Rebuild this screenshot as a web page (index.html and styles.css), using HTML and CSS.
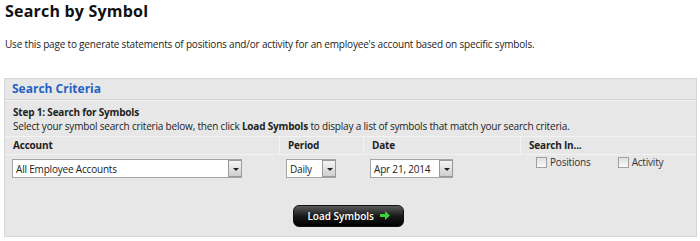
FILE: index.html
```html
<!DOCTYPE html>
<html lang="en">
<head>
    <meta charset="UTF-8">
    <title>Search by Symbol</title>
    <link rel="stylesheet" href="styles.css">
</head>
<body>
    <div class="page-title">Search by Symbol</div>
    <p class="intro">Use this page to generate statements of positions and/or activity for an employee's account based on specific symbols.</p>

    <div class="panel">
        <div class="panel-head">Search Criteria</div>
        <div class="step">
            <div class="step-title">Step 1: Search for Symbols</div>
            <div class="step-text">Select your symbol search criteria below, then click <b>Load Symbols</b> to display a list of symbols that match your search criteria.</div>
        </div>

        <div class="criteria">
            <div class="col-head">Account</div>
            <div class="col-head sep">Period</div>
            <div class="col-head sep">Date</div>
            <div class="col-head sep">Search In...</div>

            <div class="cell">
                <div class="dropdown dd-account"><span class="dd-value">All Employee Accounts</span><span class="dd-arrow"></span></div>
            </div>
            <div class="cell">
                <div class="dropdown dd-period"><span class="dd-value">Daily</span><span class="dd-arrow"></span></div>
            </div>
            <div class="cell">
                <div class="dropdown dd-date"><span class="dd-value">Apr 21, 2014</span><span class="dd-arrow"></span></div>
            </div>
            <div class="cell checks">
                <label class="check"><span class="box"></span>Positions</label>
                <label class="check"><span class="box"></span>Activity</label>
            </div>
        </div>

        <div class="actions">
            <button class="load-button">Load Symbols
                <svg width="10" height="9" viewBox="0 0 10 9"><path d="M0 3h5V0l5 4.5L5 9V6H0z" fill="#3bd13b"/></svg>
            </button>
        </div>
    </div>
</body>
</html>
```
FILE: styles.css
```css
body {
    margin: 0;
    padding: 0 3px 0 4px;
    font-family: "Open Sans", "DejaVu Sans", sans-serif;
    font-size: 10px;
    letter-spacing: -0.19px;
    color: #222;
    background: #fff;
}
.page-title {
    font-size: 16px;
    font-weight: bold;
    letter-spacing: 0.2px;
    color: #111;
    padding: 1px 0 0 1px;
    line-height: 20px;
}
.intro {
    margin: 13px 0 0 1px;
    line-height: 20px;
}
.panel {
    margin-top: 24px;
    background: #e7e7e7;
    border: 1px solid #d6d6d6;
    height: 157px;
}
.panel-head {
    color: #1f63c4;
    font-size: 12px;
    font-weight: bold;
    letter-spacing: 0;
    line-height: 20px;
    padding: 0 7px;
    border-bottom: 1px solid #d3d3d3;
    box-shadow: 0 1px 0 #f4f4f4;
}
.step {
    padding: 5px 8px 3px;
    line-height: 14px;
}
.step-title {
    font-weight: bold;
}
.criteria {
    display: grid;
    grid-template-columns: 274px 84px 157px 1fr;
}
.col-head {
    font-weight: bold;
    padding: 0 8px;
    line-height: 17px;
    border-top: 1px solid #f3f3f3;
    border-bottom: 1px solid #f3f3f3;
}
.col-head.sep {
    border-left: 1px solid #f3f3f3;
}
.cell {
    padding: 4px 8px 0 7px;
}
.dropdown {
    display: flex;
    align-items: center;
    height: 17px;
    background: #fff;
    border: 1px solid #a5a5a5;
    border-right: 0;
}
.dd-value {
    flex: 1;
    padding-left: 3px;
    white-space: nowrap;
}
.dd-arrow {
    width: 14px;
    height: 17px;
    box-sizing: border-box;
    border: 1px solid #999;
    background: linear-gradient(#f4f4f4, #cfcfcf);
    position: relative;
}
.dd-arrow::after {
    content: "";
    position: absolute;
    left: 4px;
    top: 7px;
    border-left: 3px solid transparent;
    border-right: 3px solid transparent;
    border-top: 3px solid #222;
}
.dd-account {
    width: 229px;
}
.dd-period {
    width: 49px;
}
.dd-date {
    width: 82px;
}
.checks {
    display: flex;
    align-items: flex-start;
    gap: 27px;
    padding: 1px 0 0 16px;
}
.check {
    display: flex;
    align-items: center;
    gap: 3px;
    line-height: 12px;
    color: #333;
}
.box {
    width: 9px;
    height: 9px;
    border: 1px solid #a0a0a0;
    background: linear-gradient(#e0e0e0, #fafafa);
}
.actions {
    text-align: center;
    padding-top: 27px;
}
.load-button {
    width: 111px;
    height: 22px;
    margin-right: 4px;
    border: 1px solid #111;
    border-radius: 6px;
    background: linear-gradient(#5a5a5a, #1a1a1a 50%, #000);
    color: #fff;
    font-family: inherit;
    font-size: 10px;
    font-weight: 600;
    letter-spacing: 0;
    cursor: pointer;
}
.load-button svg {
    margin-left: 3px;
}
```
